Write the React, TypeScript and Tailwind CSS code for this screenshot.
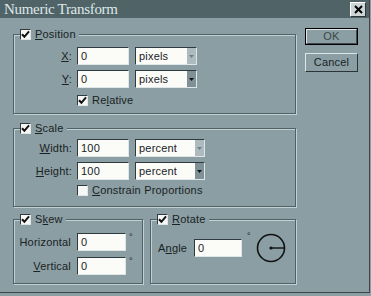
import React from "react";

const sunken =
  "border border-t-[#2e3a3d] border-l-[#2e3a3d] border-b-[#dfe6e8] border-r-[#dfe6e8]";

function Check({ checked }: { checked: boolean }) {
  return (
    <span className={`w-[11px] h-[11px] shrink-0 bg-[#f7f8f6] flex items-center justify-center ${sunken}`}>
      {checked && (
        <svg width="9" height="9" viewBox="0 0 9 9">
          <path d="M1 4.2 L3.4 6.8 L8 1.4" fill="none" stroke="#111" strokeWidth="2" />
        </svg>
      )}
    </span>
  );
}

function Field({ value, w }: { value: string; w: string }) {
  return (
    <div className={`${w} h-[18px] bg-[#fbfbf8] flex items-center pl-[3px] ${sunken}`}>
      {value}
    </div>
  );
}

function Select({ value, w, dark }: { value: string; w: string; dark?: boolean }) {
  return (
    <div className={`${w} h-[18px] bg-[#fbfbf8] flex items-center ${sunken}`}>
      <span className="flex-1 pl-[3px]">{value}</span>
      <span
        className={`w-[9px] h-full flex items-center justify-center ${
          dark ? "bg-[#7f9196]" : "bg-[#aebbbe]"
        }`}
      >
        <svg width="5" height="3" viewBox="0 0 5 3">
          <path d="M0 0 L5 0 L2.5 3 Z" fill={dark ? "#111" : "#6f7e82"} />
        </svg>
      </span>
    </div>
  );
}

function Group({
  title,
  className,
  children,
}: {
  title: React.ReactNode;
  className?: string;
  children: React.ReactNode;
}) {
  return (
    <div
      className={`relative border border-[#4f6266] shadow-[1px_1px_0_#c2d0d3,inset_1px_1px_0_#c2d0d3] ${className ?? ""}`}
    >
      <div className="absolute -top-[7px] left-[6px] flex items-center gap-[4px] bg-[#8a9ea3] pr-[3px]">
        <Check checked />
        <span className="leading-[12px]">{title}</span>
      </div>
      {children}
    </div>
  );
}

function U({ children }: { children: React.ReactNode }) {
  return <span className="underline underline-offset-1">{children}</span>;
}

export default function App() {
  return (
    <div className="w-[371px] h-[296px] bg-[#8a9ea3] text-[11px] tracking-[0.2px] text-[#1a2223] font-['Liberation_Sans',Arial,sans-serif] overflow-hidden">
      <div className="w-[370px] h-[293px] border-r border-b border-[#3b4749]">
        <div className="h-[18px] bg-[#506468] flex items-center justify-between pl-[4px] pr-[3px]">
          <span className="font-['Liberation_Serif','Times_New_Roman',serif] text-[15px] leading-[18px] text-[#dfe8e8] tracking-[-0.3px]">
            Numeric Transform
          </span>
          <div className="w-[16px] h-[15px] bg-[#cfd6d6] border border-t-white border-l-white border-b-[#2c3638] border-r-[#2c3638] flex items-center justify-center">
            <svg width="9" height="9" viewBox="0 0 9 9">
              <path d="M1 1 L8 8 M8 1 L1 8" stroke="#000" strokeWidth="2" />
            </svg>
          </div>
        </div>

        <div className="flex pl-[13px]">
          <div className="w-[283px] flex flex-col">
            <Group
              className="mt-[16px] pt-[12px] pb-[7px]"
              title={
                <>
                  <U>P</U>osition
                </>
              }
            >
              <div className="flex items-center">
                <span className="w-[63px] text-right pr-[5px]">
                  <U>X</U>:
                </span>
                <Field value="0" w="w-[52px]" />
                <div className="ml-[6px]">
                  <Select value="pixels" w="w-[62px]" />
                </div>
              </div>
              <div className="flex items-center mt-[5px]">
                <span className="w-[63px] text-right pr-[5px]">
                  <U>Y</U>:
                </span>
                <Field value="0" w="w-[52px]" />
                <div className="ml-[6px]">
                  <Select value="pixels" w="w-[62px]" dark />
                </div>
              </div>
              <div className="flex items-center gap-[4px] mt-[6px] ml-[63px] h-[12px]">
                <Check checked />
                <span>
                  Re<U>l</U>ative
                </span>
              </div>
            </Group>

            <Group
              className="mt-[14px] pt-[10px] pb-[10px]"
              title={
                <>
                  <U>S</U>cale
                </>
              }
            >
              <div className="flex items-center">
                <span className="w-[63px] text-right pr-[5px]">
                  <U>W</U>idth:
                </span>
                <Field value="100" w="w-[52px]" />
                <div className="ml-[6px]">
                  <Select value="percent" w="w-[70px]" />
                </div>
              </div>
              <div className="flex items-center mt-[5px]">
                <span className="w-[63px] text-right pr-[5px]">
                  <U>H</U>eight:
                </span>
                <Field value="100" w="w-[52px]" />
                <div className="ml-[6px]">
                  <Select value="percent" w="w-[70px]" dark />
                </div>
              </div>
              <div className="flex items-center gap-[4px] mt-[4px] ml-[63px] h-[12px]">
                <Check checked={false} />
                <span>
                  <U>C</U>onstrain Proportions
                </span>
              </div>
            </Group>

            <div className="flex mt-[12px] h-[65px]">
              <Group
                className="w-[130px] pt-[13px]"
                title={
                  <>
                    S<U>k</U>ew
                  </>
                }
              >
                <div className="flex items-center">
                  <span className="w-[63px] text-right pr-[6px]">Horizontal</span>
                  <Field value="0" w="w-[49px]" />
                  <span className="ml-[3px] self-start text-[9px] leading-[9px]">°</span>
                </div>
                <div className="flex items-center mt-[6px]">
                  <span className="w-[63px] text-right pr-[6px]">
                    <U>V</U>ertical
                  </span>
                  <Field value="0" w="w-[49px]" />
                  <span className="ml-[3px] self-start text-[9px] leading-[9px]">°</span>
                </div>
              </Group>
              <Group
                className="flex-1 ml-[7px] pt-[12px] pl-[7px]"
                title={
                  <>
                    <U>R</U>otate
                  </>
                }
              >
                <div className="flex items-center">
                  <span className="w-[36px]">
                    A<U>n</U>gle
                  </span>
                  <Field value="0" w="w-[48px]" />
                  <span className="ml-[5px] self-start text-[9px] leading-[9px]">°</span>
                  <svg width="32" height="32" viewBox="0 0 32 32" className="ml-[4px]">
                    <circle cx="16" cy="16" r="13.5" fill="none" stroke="#111" strokeWidth="1.6" />
                    <path d="M16 16 L29 16" stroke="#111" strokeWidth="1.4" />
                    <circle cx="16" cy="16" r="1.6" fill="#111" />
                  </svg>
                </div>
              </Group>
            </div>
          </div>

          <div className="ml-[9px] mt-[10px] flex flex-col">
            <div className="w-[53px] h-[17px] border border-black">
              <div className="w-full h-full border border-t-[#dde6e8] border-l-[#dde6e8] border-b-[#3e4c4f] border-r-[#3e4c4f] flex items-center justify-center text-[#3c4749]">
                OK
              </div>
            </div>
            <div className="mt-[8px] w-[53px] h-[19px] border border-t-[#dde6e8] border-l-[#dde6e8] border-b-[#2b3537] border-r-[#2b3537] flex items-center justify-center">
              Cancel
            </div>
          </div>
        </div>
      </div>
    </div>
  );
}
